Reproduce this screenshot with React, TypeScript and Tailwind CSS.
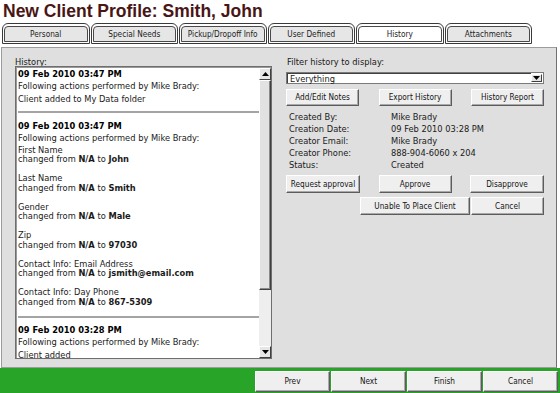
import React from "react";

const raised =
  "flex items-center justify-center bg-[#efefef] border border-t-[#ffffff] border-l-[#ffffff] border-b-[#5c5c5c] border-r-[#5c5c5c] shadow-[inset_-1px_-1px_0_#a9a9a9] text-[8.2px] text-[#141414] font-['DejaVu_Sans_Condensed','Liberation_Sans',Arial,sans-serif] leading-none whitespace-nowrap";

function Tab({ label, active }: { label: string; active?: boolean }) {
  return (
    <div className="w-[87.5px] h-[21px] shrink-0 border border-[#3a3a3a] rounded-t-[6px] bg-white pt-[2px] px-[1px] pb-[1px]">
      <div
        className={
          "h-full border border-[#4a4a4a] rounded-t-[4px] flex items-center justify-center text-[8.2px] text-[#1c1c1c] font-['DejaVu_Sans_Condensed','Liberation_Sans',Arial,sans-serif] whitespace-nowrap " +
          (active ? "bg-white" : "bg-[#e6e6e6]")
        }
      >
        {label}
      </div>
    </div>
  );
}

function Tri({ down }: { down?: boolean }) {
  return (
    <svg width="7" height="4" viewBox="0 0 7 4">
      <path d={down ? "M0 0H7L3.5 4Z" : "M3.5 0L7 4H0Z"} fill="#000" />
    </svg>
  );
}

function Change({ field, to }: { field: string; to: string }) {
  return (
    <>
      <div className="h-[9.5px]">{field}</div>
      <div className="h-[9.5px]">
        changed from <b>N/A</b> to <b>{to}</b>
      </div>
    </>
  );
}

function Blank() {
  return <div className="h-[9.5px]" />;
}

function InfoRow({ k, v }: { k: string; v: string }) {
  return (
    <div className="flex h-[12px] leading-[12px]">
      <div className="w-[105px] pl-[3px]">{k}</div>
      <div>{v}</div>
    </div>
  );
}

export default function App() {
  return (
    <div className="w-[560px] h-[393px] flex flex-col bg-white overflow-hidden">
      <div className="h-[23px] pl-[3px] text-[17.5px] font-bold leading-[22px] text-[#4a1515] font-['Liberation_Sans',Arial,sans-serif] whitespace-nowrap">
        New Client Profile: Smith, John
      </div>
      <div className="h-[21px] flex pl-[2px] gap-[1px]">
        <Tab label="Personal" />
        <Tab label="Special Needs" />
        <Tab label="Pickup/Dropoff Info" />
        <Tab label="User Defined" />
        <Tab label="History" active />
        <Tab label="Attachments" />
      </div>
      <div className="h-[3px]" />
      <div className="ml-[1px] w-[556px] h-[321px] border border-[#9c9c9c] border-r-[#707070] bg-[#dfdfdf] flex pt-[9px] pl-[13px] gap-[14px] text-[8.3px] text-[#1a1a1a] font-['DejaVu_Sans',Verdana,sans-serif]">
        {/* Left column */}
        <div className="w-[257px] flex flex-col">
          <div className="h-[9px] leading-[10px]">History:</div>
          <div className="h-[293px] border border-[#6e6e6e] bg-white flex">
            <div className="flex-1 border-t border-l border-[#9a9a9a] flex min-w-0">
              <div className="flex-1 pl-[1px] overflow-hidden min-w-0 whitespace-nowrap">
                <div className="h-[12px] leading-[12px] font-bold text-black">09 Feb 2010 03:47 PM</div>
                <div className="h-[12.5px] leading-[12.5px]">Following actions performed by Mike Brady:</div>
                <div className="h-[12.5px] leading-[12.5px]">Client added to My Data folder</div>
                <div className="mt-[6px] h-[2px] bg-[#a4a4a4]" />
                <div className="mt-[7px] h-[12px] leading-[12px] font-bold text-black">09 Feb 2010 03:47 PM</div>
                <div className="h-[12.5px] leading-[12.5px]">Following actions performed by Mike Brady:</div>
                <div className="mt-[1px] leading-[9.5px]">
                  <Change field="First Name" to="John" />
                  <Blank />
                  <Change field="Last Name" to="Smith" />
                  <Blank />
                  <Change field="Gender" to="Male" />
                  <Blank />
                  <Change field="Zip" to="97030" />
                  <Blank />
                  <Change field="Contact Info: Email Address" to="jsmith@email.com" />
                  <Blank />
                  <Change field="Contact Info: Day Phone" to="867-5309" />
                </div>
                <div className="mt-[9px] h-[2px] bg-[#a4a4a4]" />
                <div className="mt-[6px] h-[12px] leading-[12px] font-bold text-black">09 Feb 2010 03:28 PM</div>
                <div className="h-[12.5px] leading-[12.5px]">Following actions performed by Mike Brady:</div>
                <div className="h-[12.5px] leading-[12.5px]">Client added</div>
              </div>
              <div className="w-[12px] flex flex-col bg-[#eeeeee]">
                <div className="h-[12px] flex items-center justify-center bg-[#e6e6e6] border border-t-[#ffffff] border-l-[#ffffff] border-b-[#404040] border-r-[#404040]">
                  <Tri />
                </div>
                <div className="h-[210px] bg-[#e2e2e2] border border-t-[#ffffff] border-l-[#ffffff] border-b-[#404040] border-r-[#404040] shadow-[inset_-1px_-1px_0_#8a8a8a]" />
                <div className="flex-1" />
                <div className="h-[12px] flex items-center justify-center bg-[#e6e6e6] border border-t-[#ffffff] border-l-[#ffffff] border-b-[#404040] border-r-[#404040]">
                  <Tri down />
                </div>
              </div>
            </div>
          </div>
        </div>
        {/* Right column */}
        <div className="w-[258px] flex flex-col">
          <div className="h-[10px] leading-[10px] pl-[1px]">Filter history to display:</div>
          <div className="mt-[5px] h-[12px] bg-white border border-[#7a7a7a] flex">
            <div className="flex-1 border-t border-l border-[#404040] leading-[10px] pl-[2px]">Everything</div>
            <div className="w-[11px] my-[1px] mr-[1px] flex items-center justify-center bg-[#e4e4e4] border border-t-[#ffffff] border-l-[#ffffff] border-b-[#404040] border-r-[#404040]">
              <Tri down />
            </div>
          </div>
          <div className="mt-[5px] h-[17px] flex justify-between">
            <div className={raised + " w-[73px]"}>Add/Edit Notes</div>
            <div className={raised + " w-[73px]"}>Export History</div>
            <div className={raised + " w-[73px]"}>History Report</div>
          </div>
          <div className="mt-[5px]">
            <InfoRow k="Created By:" v="Mike Brady" />
            <InfoRow k="Creation Date:" v="09 Feb 2010 03:28 PM" />
            <InfoRow k="Creator Email:" v="Mike Brady" />
            <InfoRow k="Creator Phone:" v="888-904-6060 x 204" />
            <InfoRow k="Status:" v="Created" />
          </div>
          <div className="mt-[4px] h-[18px] flex justify-between">
            <div className={raised + " w-[74px]"}>Request approval</div>
            <div className={raised + " w-[73px]"}>Approve</div>
            <div className={raised + " w-[74px]"}>Disapprove</div>
          </div>
          <div className="mt-[4px] h-[18px] flex justify-end gap-[1px]">
            <div className={raised + " w-[110px]"}>Unable To Place Client</div>
            <div className={raised + " w-[73px]"}>Cancel</div>
          </div>
        </div>
      </div>
      <div className="h-[25px] bg-[#28a428] flex justify-end pt-[3px] pr-[2px] pb-[1px] gap-[1px]">
        <div className={raised + " w-[75px]"}>Prev</div>
        <div className={raised + " w-[75px]"}>Next</div>
        <div className={raised + " w-[75px]"}>Finish</div>
        <div className={raised + " w-[75px]"}>Cancel</div>
      </div>
    </div>
  );
}
